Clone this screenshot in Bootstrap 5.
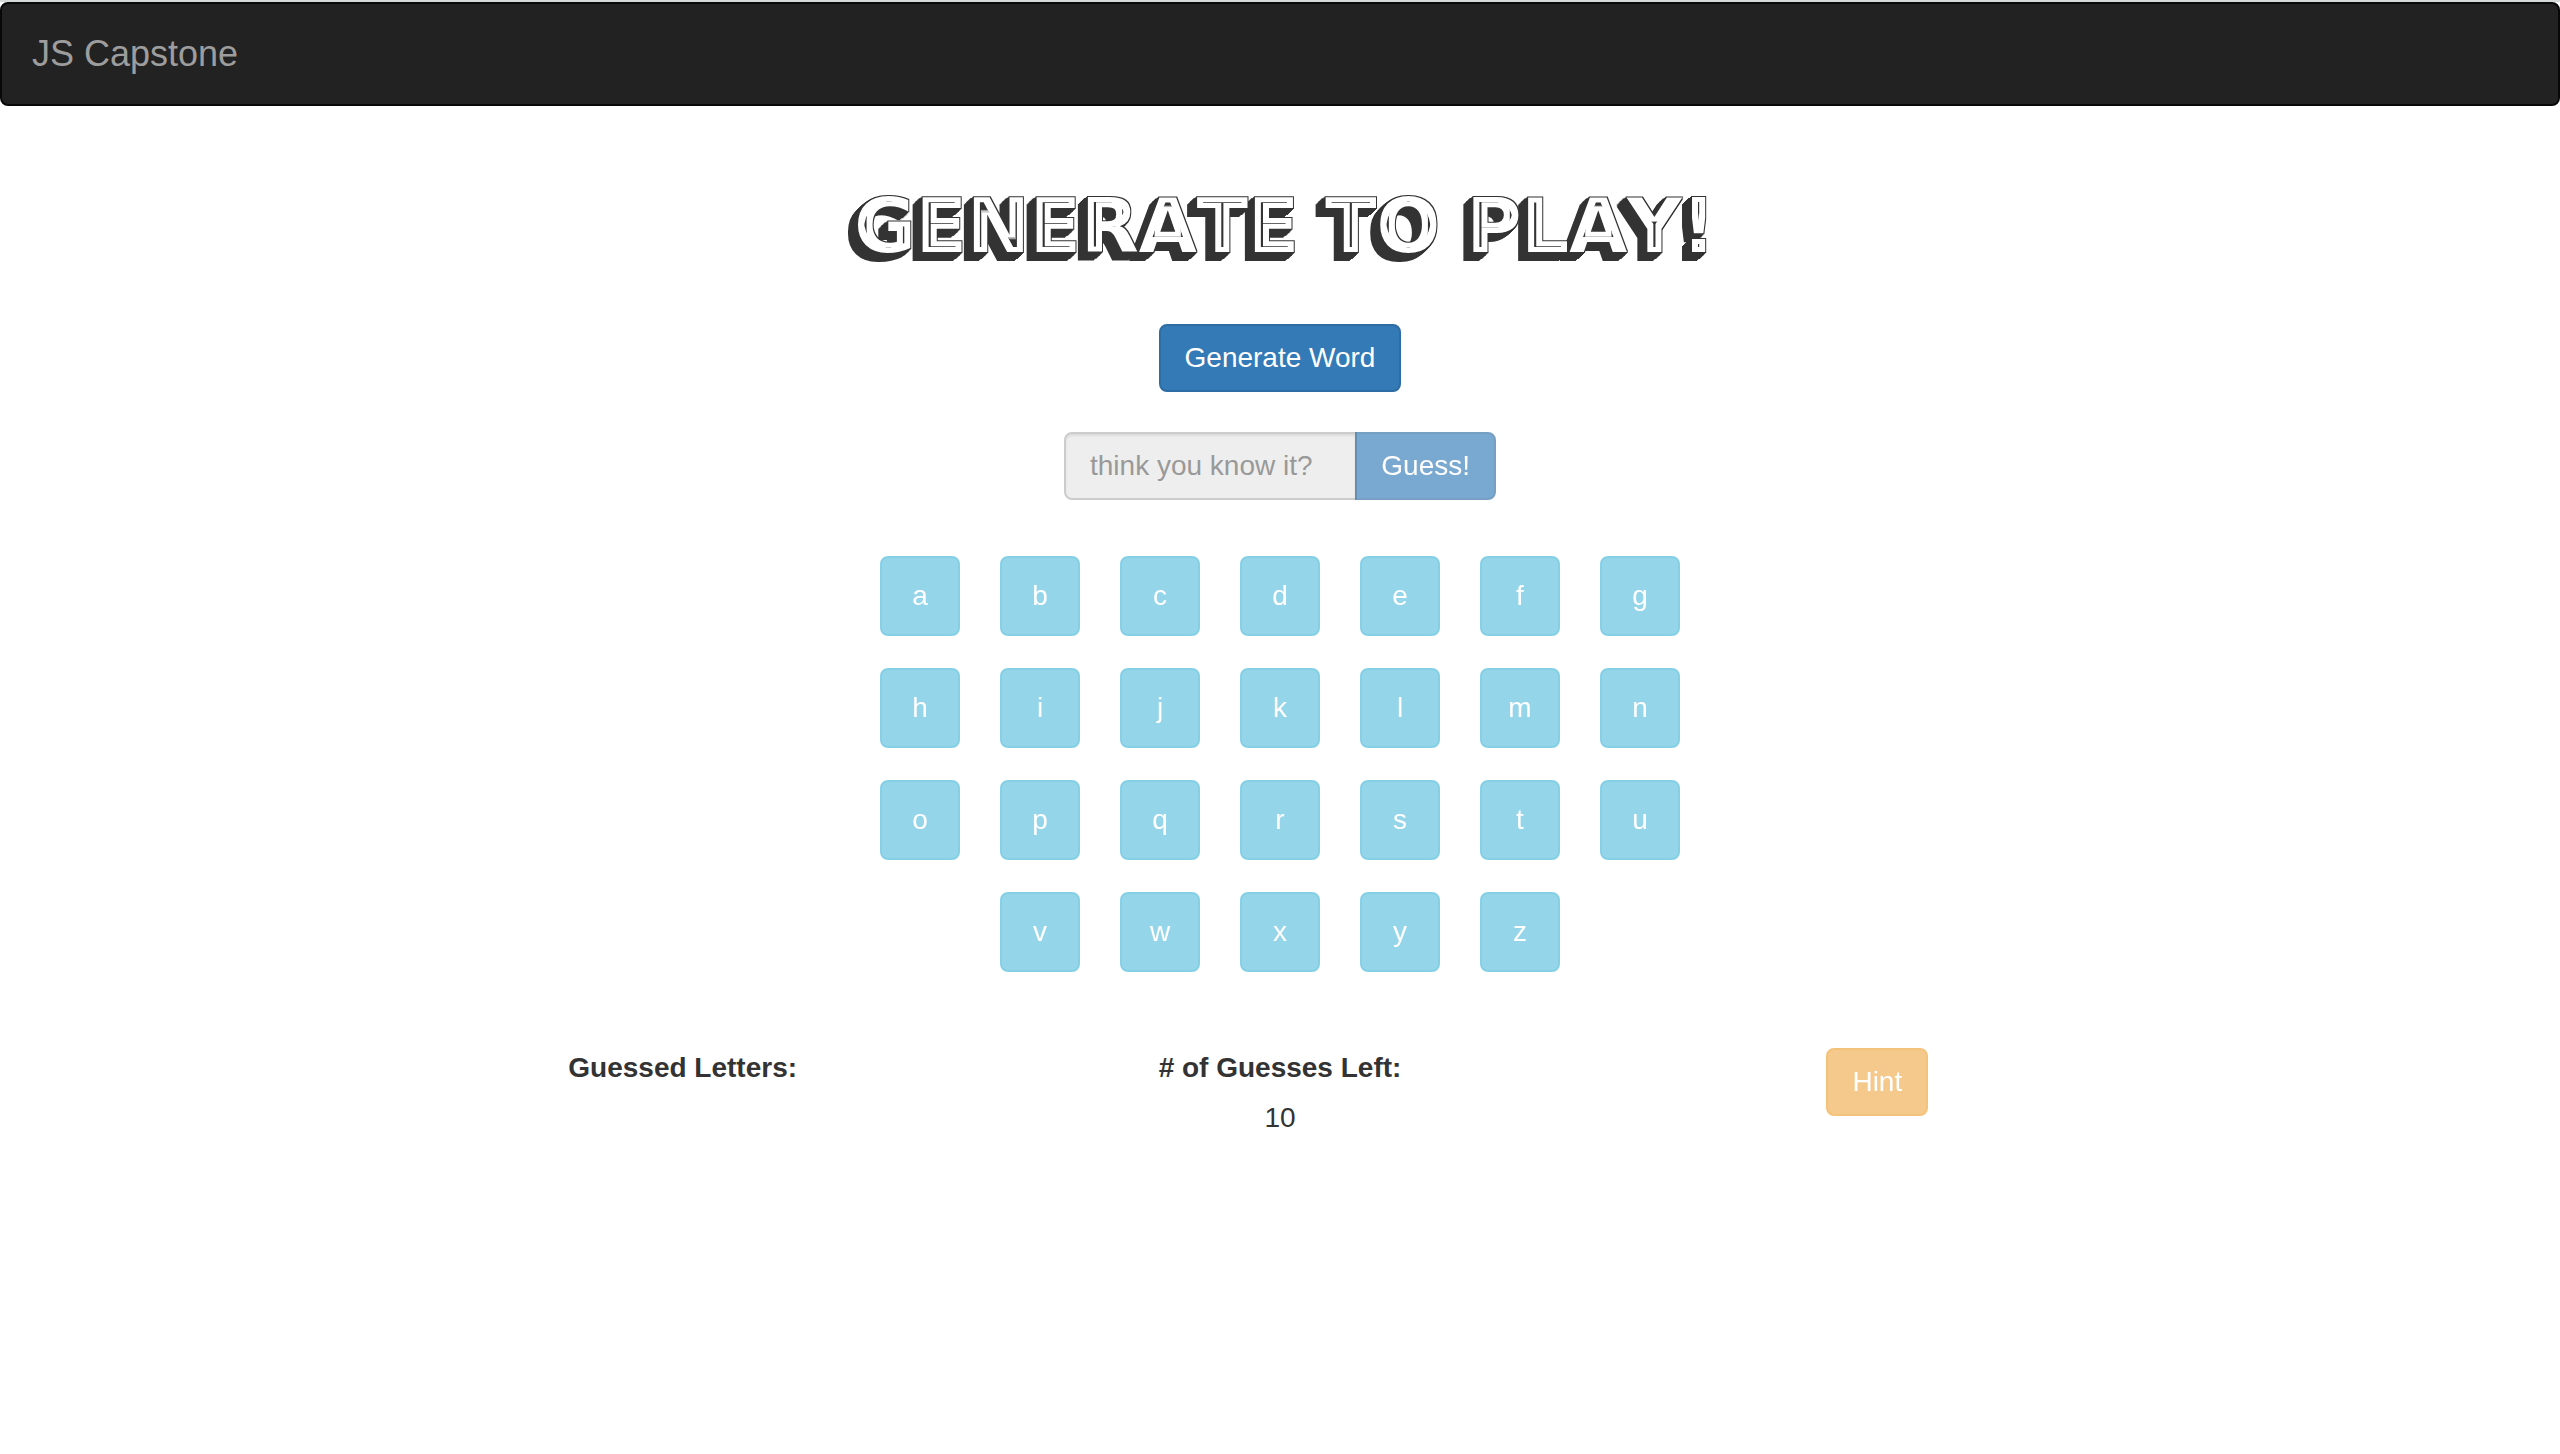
<!DOCTYPE html>
<html lang="en">
<head>
<meta charset="utf-8">
<meta name="viewport" content="width=device-width, initial-scale=1">
<title>JS Capstone</title>
<link href="https://cdn.jsdelivr.net/npm/bootstrap@5.3.0/dist/css/bootstrap.min.css" rel="stylesheet">
<style>
  body {
    font-family: "Liberation Sans", Arial, sans-serif;
    font-size: 28px;
    line-height: 40px;
    color: #333;
    background: #fff;
    border-top: 2px solid #d5d9d9;
  }
  .site-bar {
    min-height: 104px;
    padding: 0 30px;
    background: #222;
    border: 2px solid #080808;
    border-radius: 8px;
  }
  .site-bar .navbar-brand { color: #9d9d9d; font-size: 36px; line-height: 40px; }
  .game-title {
    margin: 80px 0 58px;
    padding-left: 10px;
    font-family: "DejaVu Sans", sans-serif;
    font-size: 75px;
    line-height: 80px;
    font-weight: 700;
    font-kerning: none;
    color: #333;
    filter: url(#block-shade);
  }
  .btn, .form-control {
    font-size: 28px;
    line-height: 40px;
    padding: 12px 24px;
    border-width: 2px;
    border-radius: 8px;
  }
  .btn:disabled { opacity: .65; }
  .btn-primary {
    --bs-btn-bg: #337ab7; --bs-btn-border-color: #2e6da4;
    --bs-btn-disabled-bg: #337ab7; --bs-btn-disabled-border-color: #2e6da4;
  }
  .btn-info {
    --bs-btn-disabled-color: #fff;
    --bs-btn-disabled-bg: #5bc0de; --bs-btn-disabled-border-color: #46b8da;
  }
  .btn-warning {
    --bs-btn-disabled-color: #fff;
    --bs-btn-disabled-bg: #f0ad4e; --bs-btn-disabled-border-color: #eea236;
  }
  .guess-form { max-width: 432px; margin-top: 40px; }
  .guess-form .form-control:disabled {
    background: #eee;
    border-color: #ccc;
    box-shadow: inset 0 2px 2px rgba(0, 0, 0, .075);
  }
  .guess-form .form-control::placeholder { color: #999; }
  .guess-form .btn { margin-left: -2px !important; }
  .key-pad { max-width: 800px; margin-top: 56px; gap: 32px 40px; }
  .key-pad .btn { width: 80px; height: 80px; padding: 0; }
  .score-row { width: 70%; margin-top: 76px; }
  .score-row p { margin-bottom: 10px; }
</style>
</head>
<body>
<svg width="0" height="0" class="position-absolute" aria-hidden="true">
  <!-- Block lettering: white face, thin outline and centre line, solid side towards the lower left -->
  <filter id="block-shade" x="-5%" y="-20%" width="110%" height="150%" color-interpolation-filters="sRGB">
    <feMorphology in="SourceGraphic" operator="dilate" radius="1" result="edge"/>
    <feOffset in="edge" dx="-1" dy="1" result="o1"/>
    <feMerge result="m1"><feMergeNode in="edge"/><feMergeNode in="o1"/></feMerge>
    <feOffset in="m1" dx="-2" dy="2" result="o2"/>
    <feMerge result="m2"><feMergeNode in="m1"/><feMergeNode in="o2"/></feMerge>
    <feOffset in="m2" dx="-3" dy="2" result="o3"/>
    <feMerge result="m3"><feMergeNode in="m2"/><feMergeNode in="o3"/></feMerge>
    <feOffset in="m3" dx="-3" dy="3" result="o4"/>
    <feMerge result="side"><feMergeNode in="m3"/><feMergeNode in="o4"/></feMerge>
    <feFlood flood-color="#fff"/>
    <feComposite in2="SourceAlpha" operator="in" result="face"/>
    <feMorphology in="SourceGraphic" operator="erode" radius="6 5" result="core"/>
    <feMerge><feMergeNode in="side"/><feMergeNode in="face"/><feMergeNode in="core"/></feMerge>
  </filter>
</svg>

<nav class="navbar site-bar">
  <a class="navbar-brand m-0" href="#">JS Capstone</a>
</nav>

<main class="d-flex flex-column align-items-center text-center">
  <h1 class="game-title">GENERATE TO PLAY!</h1>
  <button type="button" class="btn btn-primary">Generate Word</button>

  <form class="input-group flex-nowrap guess-form">
    <input type="text" class="form-control" placeholder="think you know it?" aria-label="Your guess" disabled>
    <button type="submit" class="btn btn-primary" disabled>Guess!</button>
  </form>

  <div class="d-flex flex-wrap justify-content-center key-pad">
    <button type="button" class="btn btn-info" disabled>a</button>
    <button type="button" class="btn btn-info" disabled>b</button>
    <button type="button" class="btn btn-info" disabled>c</button>
    <button type="button" class="btn btn-info" disabled>d</button>
    <button type="button" class="btn btn-info" disabled>e</button>
    <button type="button" class="btn btn-info" disabled>f</button>
    <button type="button" class="btn btn-info" disabled>g</button>
    <button type="button" class="btn btn-info" disabled>h</button>
    <button type="button" class="btn btn-info" disabled>i</button>
    <button type="button" class="btn btn-info" disabled>j</button>
    <button type="button" class="btn btn-info" disabled>k</button>
    <button type="button" class="btn btn-info" disabled>l</button>
    <button type="button" class="btn btn-info" disabled>m</button>
    <button type="button" class="btn btn-info" disabled>n</button>
    <button type="button" class="btn btn-info" disabled>o</button>
    <button type="button" class="btn btn-info" disabled>p</button>
    <button type="button" class="btn btn-info" disabled>q</button>
    <button type="button" class="btn btn-info" disabled>r</button>
    <button type="button" class="btn btn-info" disabled>s</button>
    <button type="button" class="btn btn-info" disabled>t</button>
    <button type="button" class="btn btn-info" disabled>u</button>
    <button type="button" class="btn btn-info" disabled>v</button>
    <button type="button" class="btn btn-info" disabled>w</button>
    <button type="button" class="btn btn-info" disabled>x</button>
    <button type="button" class="btn btn-info" disabled>y</button>
    <button type="button" class="btn btn-info" disabled>z</button>
  </div>

  <div class="row g-0 score-row">
    <div class="col-4"><p class="fw-bold">Guessed Letters:</p></div>
    <div class="col-4">
      <p class="fw-bold"># of Guesses Left:</p>
      <p>10</p>
    </div>
    <div class="col-4"><button type="button" class="btn btn-warning" disabled>Hint</button></div>
  </div>
</main>
<script src="https://cdn.jsdelivr.net/npm/bootstrap@5.3.0/dist/js/bootstrap.bundle.min.js"></script>
</body>
</html>
